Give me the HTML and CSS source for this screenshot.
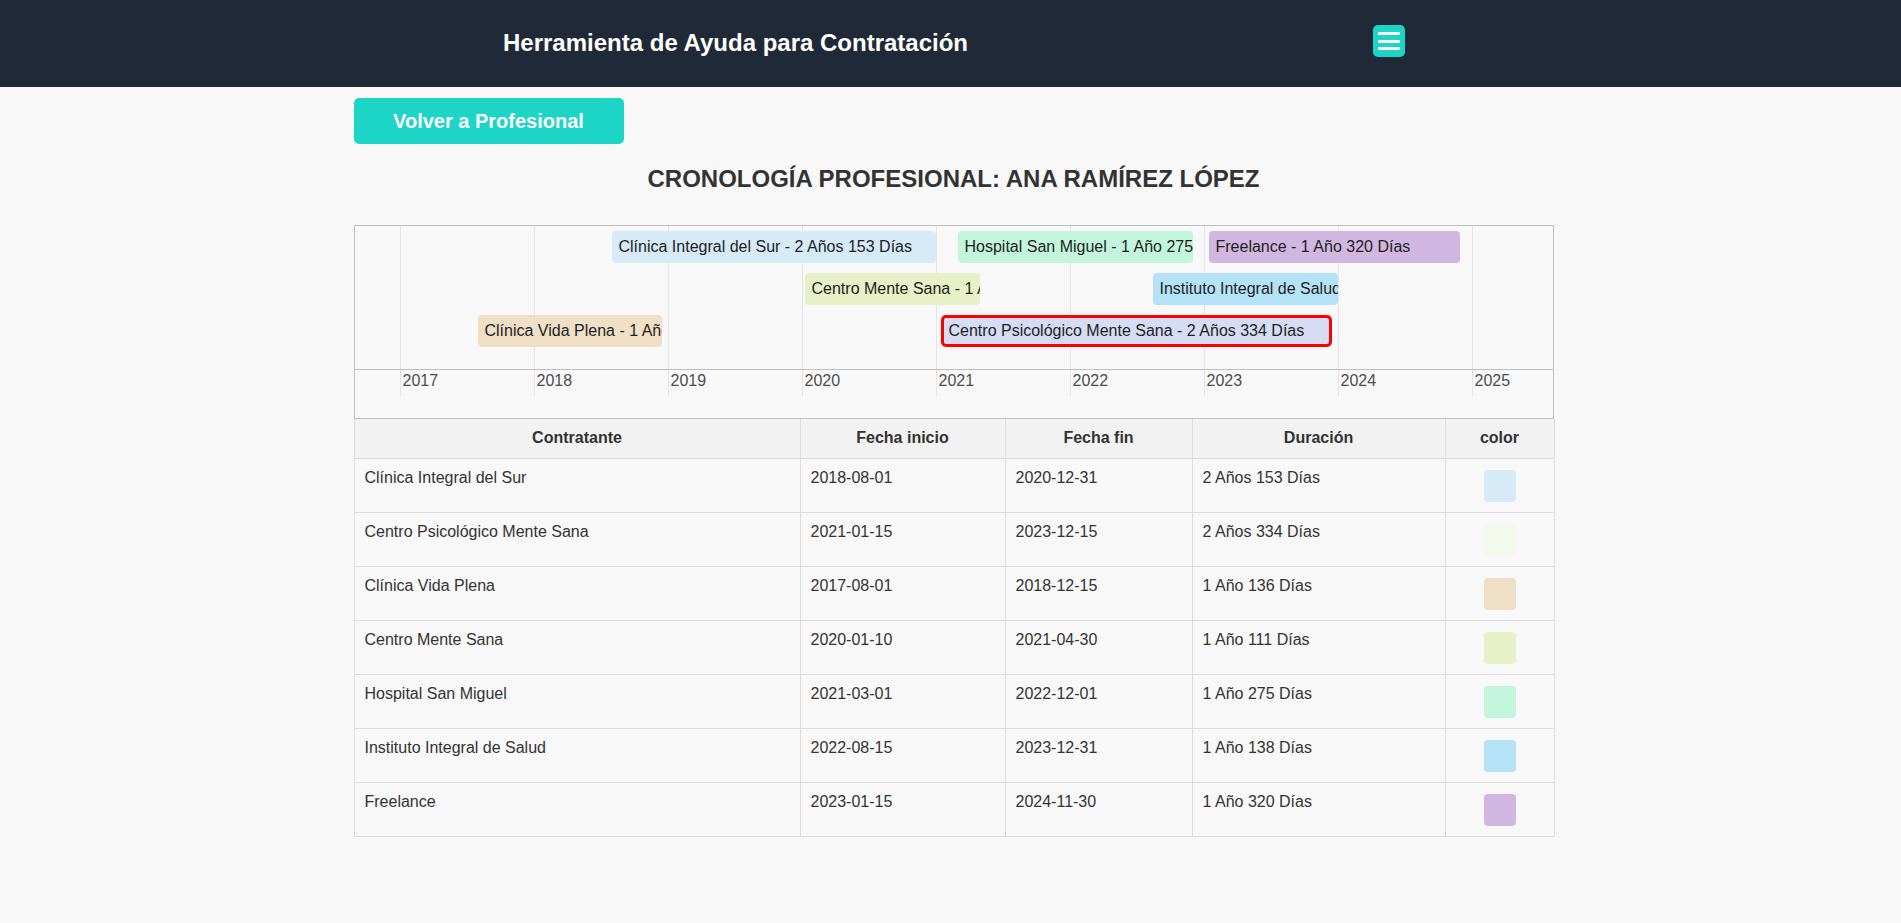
FILE: index.html
```html
<!DOCTYPE html>
<html lang="es">
<head>
<meta charset="utf-8">
<title>Cronología profesional</title>
<link rel="stylesheet" href="styles.css">
</head>
<body>
<header class="topbar">
  <div class="topbar-inner">
    <h1 class="brand">Herramienta de Ayuda para Contratación</h1>
    <button class="menu-btn" type="button" aria-label="Menú"><span></span><span></span><span></span></button>
  </div>
</header>
<main class="page">
  <a class="back-btn" href="#">Volver a Profesional</a>
  <h2 class="page-title">CRONOLOGÍA PROFESIONAL: ANA RAMÍREZ LÓPEZ</h2>

  <div class="timeline">
    <div class="grid">
      <span class="gridline" style="left:45px"></span>
      <span class="gridline" style="left:179px"></span>
      <span class="gridline" style="left:313px"></span>
      <span class="gridline" style="left:447px"></span>
      <span class="gridline" style="left:581px"></span>
      <span class="gridline" style="left:715px"></span>
      <span class="gridline" style="left:849px"></span>
      <span class="gridline" style="left:983px"></span>
      <span class="gridline" style="left:1117px"></span>
    </div>
    <div class="items">
      <div class="bar row1 c-sur" style="left:257px;width:324px">Clínica Integral del Sur - 2 Años 153 Días</div>
      <div class="bar row1 c-hosp" style="left:603px;width:235px">Hospital San Miguel - 1 Año 275 Días</div>
      <div class="bar row1 c-free" style="left:854px;width:251px">Freelance - 1 Año 320 Días</div>
      <div class="bar row2 c-mente" style="left:450px;width:175px">Centro Mente Sana - 1 Año 111 Días</div>
      <div class="bar row2 c-inst" style="left:798px;width:185px">Instituto Integral de Salud - 1 Año 138 Días</div>
      <div class="bar row3 c-vida" style="left:123px;width:184px">Clínica Vida Plena - 1 Año 136 Días</div>
      <div class="bar row3 c-psico selected" style="left:586px;width:391px">Centro Psicológico Mente Sana - 2 Años 334 Días</div>
    </div>
    <div class="axis">
      <span class="year" style="left:48px">2017</span>
      <span class="year" style="left:182px">2018</span>
      <span class="year" style="left:316px">2019</span>
      <span class="year" style="left:450px">2020</span>
      <span class="year" style="left:584px">2021</span>
      <span class="year" style="left:718px">2022</span>
      <span class="year" style="left:852px">2023</span>
      <span class="year" style="left:986px">2024</span>
      <span class="year" style="left:1120px">2025</span>
    </div>
  </div>

  <table class="jobs">
    <colgroup>
      <col class="col-name"><col class="col-start"><col class="col-end"><col class="col-dur"><col class="col-color">
    </colgroup>
    <thead>
      <tr><th>Contratante</th><th>Fecha inicio</th><th>Fecha fin</th><th>Duración</th><th>color</th></tr>
    </thead>
    <tbody>
      <tr><td>Clínica Integral del Sur</td><td>2018-08-01</td><td>2020-12-31</td><td>2 Años 153 Días</td><td class="swatch-cell"><span class="swatch c-sur"></span></td></tr>
      <tr><td>Centro Psicológico Mente Sana</td><td>2021-01-15</td><td>2023-12-15</td><td>2 Años 334 Días</td><td class="swatch-cell"><span class="swatch c-psico-soft"></span></td></tr>
      <tr><td>Clínica Vida Plena</td><td>2017-08-01</td><td>2018-12-15</td><td>1 Año 136 Días</td><td class="swatch-cell"><span class="swatch c-vida"></span></td></tr>
      <tr><td>Centro Mente Sana</td><td>2020-01-10</td><td>2021-04-30</td><td>1 Año 111 Días</td><td class="swatch-cell"><span class="swatch c-mente"></span></td></tr>
      <tr><td>Hospital San Miguel</td><td>2021-03-01</td><td>2022-12-01</td><td>1 Año 275 Días</td><td class="swatch-cell"><span class="swatch c-hosp"></span></td></tr>
      <tr><td>Instituto Integral de Salud</td><td>2022-08-15</td><td>2023-12-31</td><td>1 Año 138 Días</td><td class="swatch-cell"><span class="swatch c-inst"></span></td></tr>
      <tr><td>Freelance</td><td>2023-01-15</td><td>2024-11-30</td><td>1 Año 320 Días</td><td class="swatch-cell"><span class="swatch c-free"></span></td></tr>
    </tbody>
  </table>
</main>
</body>
</html>
```

FILE: styles.css
```css
* { box-sizing: border-box; }

body {
  margin: 0;
  background: #f8f8f8;
  font-family: "Liberation Sans", Arial, sans-serif;
  color: #333;
}

/* Top bar */
.topbar {
  background: #1f2937;
  height: 87px;
}
.topbar-inner {
  width: 902px;
  margin-left: calc(50% - 447.5px);
  height: 100%;
  padding-bottom: 5px;
  display: flex;
  align-items: center;
  justify-content: space-between;
}
.brand {
  margin: 3px 0 0 0;
  font-size: 24px;
  font-weight: 700;
  color: #fff;
  line-height: normal;
}
.menu-btn {
  width: 32px;
  height: 32px;
  padding: 0;
  border: 0;
  border-radius: 5px;
  background: #1cd5c6;
  display: flex;
  flex-direction: column;
  align-items: center;
  justify-content: center;
  gap: 4.7px;
}
.menu-btn span {
  display: block;
  width: 22px;
  height: 3px;
  background: #fff;
  border-radius: 1px;
}

/* Page */
.page {
  width: 1200px;
  margin-left: calc(50% - 597px);
}
.back-btn {
  display: flex;
  align-items: center;
  justify-content: center;
  width: 270px;
  height: 46px;
  margin-top: 11px;
  background: #1cd5c6;
  color: #fff;
  font-size: 20px;
  font-weight: 700;
  text-decoration: none;
  border-radius: 5px;
}
.page-title {
  margin: 21px 0 32px;
  text-align: center;
  font-size: 24px;
  font-weight: 700;
  color: #333;
  line-height: normal;
}

/* Timeline */
.timeline {
  position: relative;
  border: 1px solid #bfbfbf;
}
.grid {
  position: absolute;
  top: 0;
  left: 0;
  width: 100%;
  height: 170px;
}
.gridline {
  position: absolute;
  top: 0;
  width: 1px;
  height: 170px;
  background: #e5e5e5;
}
.items {
  position: relative;
  height: 143px;
}
.axis {
  position: relative;
  height: 49px;
  border-top: 1px solid #bfbfbf;
}
.year {
  position: absolute;
  top: 2px;
  font-size: 16px;
  color: #4d4d4d;
}
.bar {
  position: absolute;
  height: 32px;
  line-height: 32px;
  padding: 0 7px;
  border-radius: 4px;
  font-size: 16px;
  color: #1e1e1e;
  white-space: nowrap;
  overflow: hidden;
  z-index: 1;
}
.bar.row1 { top: 5px; }
.bar.row2 { top: 47px; }
.bar.row3 { top: 89px; }
.bar.selected {
  border: 3px solid #ff0000;
  line-height: 26px;
  padding: 0 5px;
  border-radius: 5px;
}

.c-sur { background: #d6ebf7; }
.c-hosp { background: #c3f5dc; }
.c-free { background: #d1b7e0; }
.c-mente { background: #e8f0c8; }
.c-inst { background: #b4e3f8; }
.c-vida { background: #eedfc6; }
.c-psico { background: #d5dcf4; }
.c-psico-soft { background: #f4f9ee; }

/* Table */
.jobs {
  width: 1200px;
  border-collapse: collapse;
  table-layout: fixed;
  font-size: 16px;
  color: #333;
}
.col-name { width: 446px; }
.col-start { width: 205px; }
.col-end { width: 187px; }
.col-dur { width: 253px; }
.col-color { width: 109px; }
.jobs th,
.jobs td {
  border: 1px solid #ddd;
  padding: 10px;
  text-align: left;
  vertical-align: top;
  line-height: normal;
}
.jobs thead th {
  border-top: 0;
  padding: 10px 10px 11px;
  background: #f2f2f2;
  font-weight: 700;
  text-align: center;
}
.jobs td.swatch-cell {
  padding: 11px 10px 10px;
  text-align: center;
}
.swatch {
  display: block;
  width: 32px;
  height: 32px;
  margin: 0 auto;
  border-radius: 4px;
}
```
